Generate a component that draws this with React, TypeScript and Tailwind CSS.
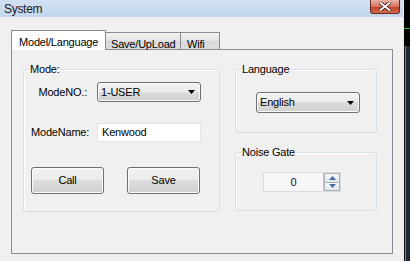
import React from "react"

const face =
  "bg-[linear-gradient(to_bottom,#f2f2f2_0%,#ebebeb_50%,#dddddd_50%,#cfcfcf_100%)] border border-[#707070] rounded-[3px] shadow-[inset_0_0_0_1px_#fbfbfb]"

function Combo({ value }: { value: string }) {
  return (
    <div className={`${face} relative flex items-center h-full pl-[3px] text-[11px]`}>
      <span>{value}</span>
      <svg className="absolute right-[5px] top-1/2 -translate-y-1/2" width="7" height="4" viewBox="0 0 7 4">
        <path d="M0 0h7L3.5 4z" fill="#000" />
      </svg>
    </div>
  )
}

function GroupBox({ title, className, children }: { title: string; className: string; children: React.ReactNode }) {
  return (
    <fieldset className={`border border-[#d5dfe5] rounded-[3px] shadow-[inset_1px_1px_0_#fff] ${className}`}>
      <legend className="ml-[5px] px-[1px] leading-[13px]">{title}</legend>
      {children}
    </fieldset>
  )
}

export default function App() {
  return (
    <div
      className="flex w-[410px] h-[261px] overflow-hidden text-[11px] tracking-[-0.2px] text-black"
      style={{ fontFamily: '"Liberation Sans", Arial, sans-serif' }}
    >
      {/* dialog window */}
      <div className="flex flex-col w-[404px] bg-[#f0f0f0] border-r border-[#e6eaef]">
        <div className="relative h-[17px] flex items-center pl-[4px] bg-[linear-gradient(to_bottom,#d2e1f2,#c3d6ed)] text-[12px] tracking-[-0.3px] text-[#1a1a1a]">
          System
          <div className="absolute right-[3px] top-0 w-[30px] h-[14px] rounded-b-[3px] border border-t-0 border-[#6b2a20] bg-[linear-gradient(to_bottom,#e9b1a5,#d8735f_50%,#c2412b_55%,#cf6a4f)] flex items-center justify-center">
            <svg width="12" height="9" viewBox="0 0 12 9">
              <path d="M1.5 1l9 7M10.5 1l-9 7" stroke="#3b1510" strokeWidth="3.4" strokeLinecap="square" />
              <path d="M1.5 1l9 7M10.5 1l-9 7" stroke="#fff" strokeWidth="1.8" strokeLinecap="square" />
            </svg>
          </div>
        </div>

        <div className="pl-[11px] pt-[13px]">
          {/* tabs */}
          <div className="flex items-end h-[19px]">
            <div className="relative z-10 w-[95px] h-[20px] -mb-px bg-white border border-b-0 border-[#898c95] pl-[7px] pt-[3px]">
              Model/Language
            </div>
            <div className="w-[76px] h-[17px] -ml-px bg-[linear-gradient(to_bottom,#f3f3f3,#e3e3e3_50%,#d9d9d9_50%,#dcdcdc)] border border-b-0 border-[#898c95] pl-[5px] pt-[3px]">
              Save/UpLoad
            </div>
            <div className="w-[40px] h-[17px] -ml-px bg-[linear-gradient(to_bottom,#f3f3f3,#e3e3e3_50%,#d9d9d9_50%,#dcdcdc)] border border-b-0 border-[#898c95] pl-[6px] pt-[3px]">
              Wifi
            </div>
          </div>

          {/* tab page */}
          <div className="flex gap-[15px] w-[382px] h-[205px] border border-[#898c95] pl-[11px] pt-[13px]">
            <GroupBox title="Mode:" className="w-[197px] h-[149px]">
              <div className="grid grid-cols-[57px_104px] gap-x-[9px] pl-[7px] pt-[6px]">
                <div className="h-[20px] flex items-center justify-end pr-[1px]">ModeNO.:</div>
                <div className="h-[20px]">
                  <Combo value="1-USER" />
                </div>
                <div className="mt-[21px] h-[19px] flex items-center">ModeName:</div>
                <div className="mt-[21px] h-[19px] bg-white border border-[#e2e6ea] flex items-center pl-[4px]">
                  Kenwood
                </div>
              </div>
              <div className="flex gap-[23px] pl-[7px] mt-[25px]">
                <button className={`${face} w-[73px] h-[27px] flex items-center justify-center`}>Call</button>
                <button className={`${face} w-[73px] h-[27px] flex items-center justify-center`}>Save</button>
              </div>
            </GroupBox>

            <div className="flex flex-col gap-[13px]">
              <GroupBox title="Language" className="w-[142px] h-[70px]">
                <div className="pl-[20px] pt-[16px]">
                  <div className="w-[104px] h-[21px]">
                    <Combo value="English" />
                  </div>
                </div>
              </GroupBox>
              <GroupBox title="Noise Gate" className="w-[142px] h-[65px]">
                <div className="pl-[27px] pt-[13px]">
                  <div className="flex w-[78px] h-[20px] border border-[#d9dde2] bg-[#f6f6f6]">
                    <div className="flex-1 flex items-center justify-center text-[#0c1450]">0</div>
                    <div className="flex flex-col w-[17px] border-l border-[#c4c8cc]">
                      <div className="flex-1 flex items-center justify-center border border-[#a9b0b8] bg-[linear-gradient(to_bottom,#f7f8fa,#e3e6ea)]">
                        <svg width="7" height="4" viewBox="0 0 7 4">
                          <path d="M0 4h7L3.5 0z" fill="#4a6aa8" />
                        </svg>
                      </div>
                      <div className="flex-1 flex items-center justify-center border border-t-0 border-[#a9b0b8] bg-[linear-gradient(to_bottom,#f7f8fa,#e3e6ea)]">
                        <svg width="7" height="4" viewBox="0 0 7 4">
                          <path d="M0 0h7L3.5 4z" fill="#4a6aa8" />
                        </svg>
                      </div>
                    </div>
                  </div>
                </div>
              </GroupBox>
            </div>
          </div>
        </div>
      </div>

      {/* desktop strip behind the window */}
      <div className="flex flex-col w-[6px]">
        <div className="h-[46px] bg-black flex flex-col">
          <div className="h-[28px]" />
          <div className="h-px bg-[#1fae3a]" />
        </div>
        <div className="flex-1 flex bg-[#1f2731]">
          <div className="w-px bg-[#0d1117]" />
          <div className="w-px bg-[#4f93cf]" />
        </div>
      </div>
    </div>
  )
}
